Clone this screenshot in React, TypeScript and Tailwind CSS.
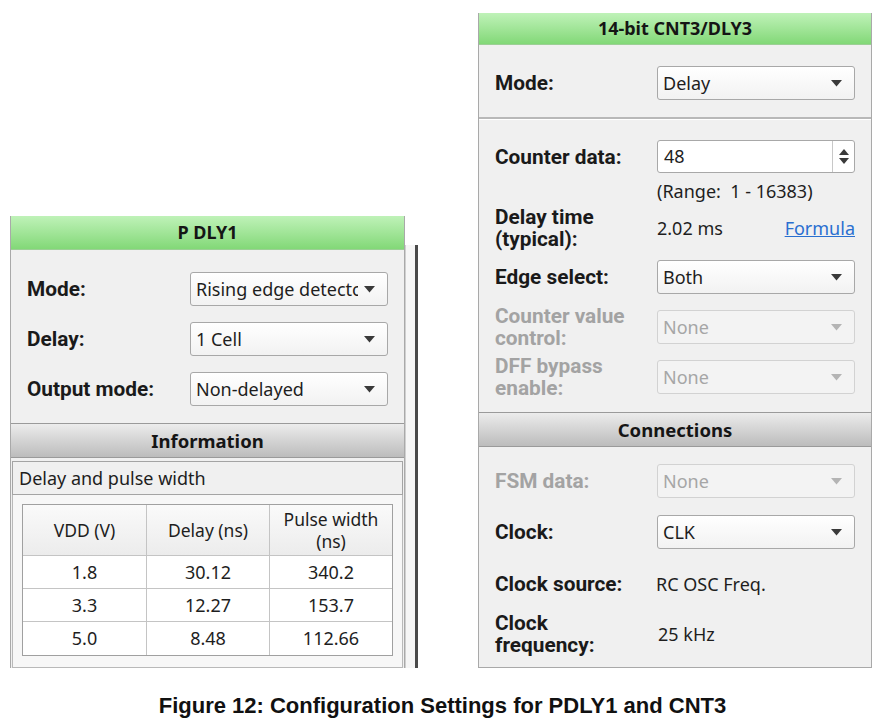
import React from "react";

const ui = "font-['Noto_Sans','Open_Sans',sans-serif]";

function Arrow({ disabled }: { disabled?: boolean }) {
  return (
    <svg width="11" height="7" viewBox="0 0 11 7" className="shrink-0">
      <path d="M0 0 H11 L5.5 6.5 Z" fill={disabled ? "#b4b4b4" : "#3a3a3a"} />
    </svg>
  );
}

function Select({ value, disabled }: { value: string; disabled?: boolean }) {
  return (
    <div
      className={`flex h-full w-[198px] items-center rounded-[3px] border pl-[5px] pr-[12px] text-[18px] ${
        disabled
          ? "border-[#d2d2d2] bg-[#f3f3f3] text-[#a6a6a6]"
          : "border-[#a8a8a8] bg-gradient-to-b from-[#ffffff] to-[#f2f2f2] text-[#1e1e1e]"
      }`}
    >
      <span className="mr-[6px] flex-1 overflow-hidden whitespace-nowrap">{value}</span>
      <Arrow disabled={disabled} />
    </div>
  );
}

function Row({
  label,
  children,
  className = "",
  muted,
}: {
  label: React.ReactNode;
  children: React.ReactNode;
  className?: string;
  muted?: boolean;
}) {
  return (
    <div className={`flex items-center ${className}`}>
      <div
        className={`w-[163px] font-['Roboto',sans-serif] text-[20.8px] font-bold leading-[22px] ${
          muted ? "text-[#a3a3a3]" : "text-[#1a1a1a]"
        }`}
      >
        {label}
      </div>
      <div className="flex h-full items-center">{children}</div>
    </div>
  );
}

function GreenHeader({ title, h }: { title: string; h: string }) {
  return (
    <div
      className={`flex ${h} items-center justify-center border-b border-[#9ccf95] bg-gradient-to-b from-[#bff2b8] to-[#82d877] text-[18px] font-bold text-[#151515]`}
    >
      {title}
    </div>
  );
}

function GrayHeader({ title, h }: { title: string; h: string }) {
  return (
    <div
      className={`flex ${h} items-center justify-center border-y border-[#9a9a9a] bg-gradient-to-b from-[#ececec] to-[#bcbcbc] text-[18.5px] font-bold text-[#151515]`}
    >
      {title}
    </div>
  );
}

const rows = [
  ["1.8", "30.12", "340.2"],
  ["3.3", "12.27", "153.7"],
  ["5.0", "8.48", "112.66"],
];

function PDly() {
  return (
    <div className="flex h-[452px] w-[395px] flex-col border-x border-[#a9a9a9] bg-[#f0f0f0]">
      <GreenHeader title="P DLY1" h="h-[34px]" />
      <div className="flex flex-col gap-[16px] px-[16px] pb-[17px] pt-[22px]">
        <Row label="Mode:" className="h-[34px]">
          <Select value="Rising edge detectc" />
        </Row>
        <Row label="Delay:" className="h-[34px]">
          <Select value="1 Cell" />
        </Row>
        <Row label="Output mode:" className="h-[34px]">
          <Select value="Non-delayed" />
        </Row>
      </div>
      <GrayHeader title="Information" h="h-[35px]" />
      <div className="mx-[1px] mt-[3px] flex h-[34px] items-center border border-[#a4a4a4] bg-[#f0f0f0] px-[6px] text-[18px] text-[#1e1e1e]">
        Delay and pulse width
      </div>
      <div className="mx-[1px] flex-1 border-x border-b border-[#b9b9b9] bg-[#f7f7f7] p-[9px]">
        <div className="border border-[#a0a0a0] bg-white">
          <div className="grid h-[51px] grid-cols-[124px_123px_1fr] border-b border-[#c4c4c4] bg-gradient-to-b from-[#fafafa] to-[#ececec] text-center text-[17.5px] leading-[22px] text-[#1e1e1e]">
            <div className="flex items-center justify-center border-r border-[#c4c4c4]">VDD (V)</div>
            <div className="flex items-center justify-center border-r border-[#c4c4c4]">Delay (ns)</div>
            <div className="flex items-center justify-center">
              Pulse width
              <br />
              (ns)
            </div>
          </div>
          {rows.map((r, i) => (
            <div
              key={r[0]}
              className={`grid h-[33px] grid-cols-[124px_123px_1fr] text-center text-[18px] text-[#1e1e1e] ${
                i < 2 ? "border-b border-[#c4c4c4]" : ""
              }`}
            >
              <div className="flex items-center justify-center border-r border-[#c4c4c4]">{r[0]}</div>
              <div className="flex items-center justify-center border-r border-[#c4c4c4]">{r[1]}</div>
              <div className="flex items-center justify-center">{r[2]}</div>
            </div>
          ))}
        </div>
      </div>
    </div>
  );
}

function Spin() {
  return (
    <div className="flex h-[33px] w-[198px] items-stretch rounded-[3px] border border-[#a8a8a8] bg-white text-[18px] text-[#1e1e1e]">
      <div className="flex flex-1 items-center pl-[6px]">48</div>
      <div className="flex w-[22px] flex-col items-center justify-center gap-[3px] border-l border-[#c8c8c8]">
        <svg width="10" height="6" viewBox="0 0 10 6">
          <path d="M0 6 L5 0 L10 6 Z" fill="#3a3a3a" />
        </svg>
        <svg width="10" height="6" viewBox="0 0 10 6">
          <path d="M0 0 H10 L5 6 Z" fill="#3a3a3a" />
        </svg>
      </div>
    </div>
  );
}

function Cnt() {
  return (
    <div className="flex h-[655px] w-[394px] flex-col border-x border-[#a9a9a9] bg-[#f0f0f0]">
      <GreenHeader title="14-bit CNT3/DLY3" h="h-[32px]" />
      <div className="border-b-2 border-b-[#b8b8b8] px-[16px] pb-[17px] pt-[21px]">
        <Row label="Mode:" className="h-[34px]">
          <Select value="Delay" />
        </Row>
      </div>
      <div className="flex flex-col border-t border-white px-[16px] pb-[18px]">
        <Row label="Counter data:" className="mt-[20px] h-[33px]">
          <Spin />
        </Row>
        <div className="flex h-[28px] items-end pl-[162px] text-[18px] leading-[20px] text-[#1e1e1e]">
          (Range:&nbsp; 1 - 16383)
        </div>
        <Row
          label={
            <>
              Delay time
              <br />
              (typical):
            </>
          }
          className="mt-[4px] h-[46px]"
        >
          <div className="flex w-[198px] items-center justify-between text-[18px] text-[#1e1e1e]">
            <span>2.02 ms</span>
            <span className="text-[#2a6fd0] underline">Formula</span>
          </div>
        </Row>
        <Row label="Edge select:" className="mt-[9px] h-[34px]">
          <Select value="Both" />
        </Row>
        <Row
          muted
          label={
            <>
              Counter value
              <br />
              control:
            </>
          }
          className="mt-[16px] h-[34px]"
        >
          <Select value="None" disabled />
        </Row>
        <Row
          muted
          label={
            <>
              DFF bypass
              <br />
              enable:
            </>
          }
          className="mt-[16px] h-[34px]"
        >
          <Select value="None" disabled />
        </Row>
      </div>
      <GrayHeader title="Connections" h="h-[35px]" />
      <div className="flex flex-1 flex-col border-b border-[#a9a9a9] px-[16px]">
        <Row muted label="FSM data:" className="mt-[17px] h-[34px]">
          <Select value="None" disabled />
        </Row>
        <Row label="Clock:" className="mt-[17px] h-[34px]">
          <Select value="CLK" />
        </Row>
        <Row label="Clock source:" className="mt-[18px] h-[34px]">
          <span className="-ml-[2px] text-[18px] text-[#1e1e1e]">RC OSC Freq.</span>
        </Row>
        <Row
          label={
            <>
              Clock
              <br />
              frequency:
            </>
          }
          className="mt-[10px] h-[46px]"
        >
          <span className="text-[18px] text-[#1e1e1e]">25 kHz</span>
        </Row>
      </div>
    </div>
  );
}

export default function App() {
  return (
    <div className={`flex h-[723px] w-[885px] flex-col overflow-hidden bg-white ${ui}`}>
      <div className="flex items-start">
        <div className="ml-[10px] mt-[216px] flex items-start">
          <PDly />
          <div className="mt-[29px] h-[423px] w-[10px] border-l border-[#d0d0d0] bg-[#f6f6f6]" />
          <div className="mt-[29px] h-[423px] w-[3px] bg-[#4a4a4a]" />
        </div>
        <div className="ml-[60px] mt-[13px]">
          <Cnt />
        </div>
      </div>
      <div className="mt-[25px] text-center font-['Liberation_Sans',Arial,sans-serif] text-[22px] font-bold leading-[26px] text-[#111]">
        Figure 12: Configuration Settings for PDLY1 and CNT3
      </div>
    </div>
  );
}
